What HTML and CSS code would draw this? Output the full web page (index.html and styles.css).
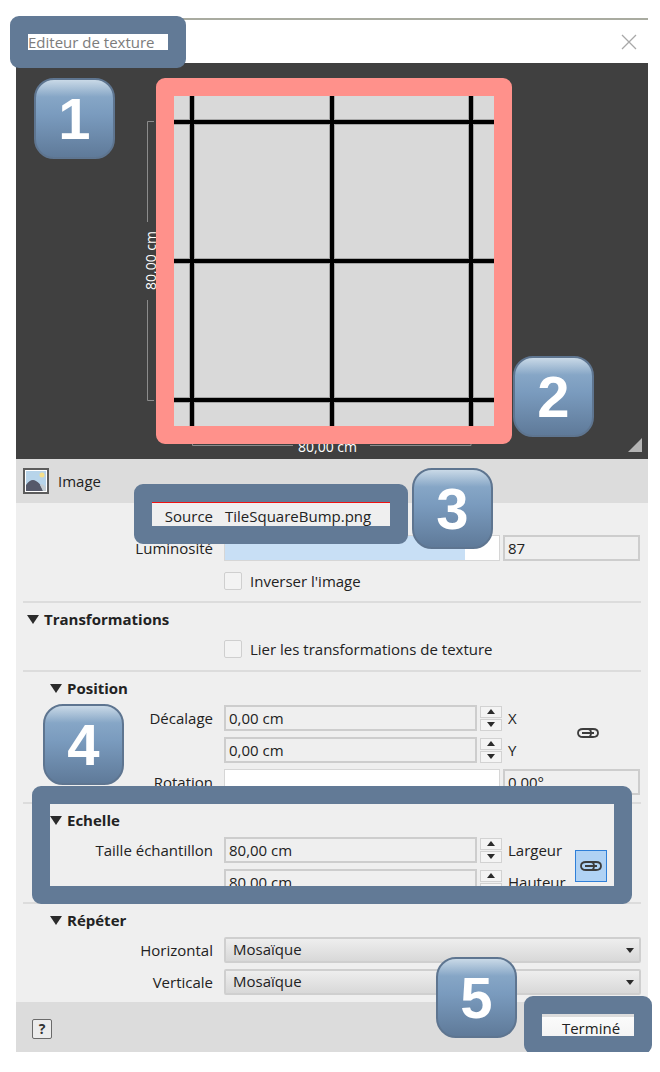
FILE: index.html
```html
<!DOCTYPE html>
<html>
<head>
    <title>Editeur de texture</title>
    <link rel="stylesheet" href="styles.css">
</head>
<body>
    <div class="window">
        <div class="titlebar">
            <span class="title">Editeur de texture</span>
            <svg class="close" width="16" height="16" viewBox="0 0 16 16"><path d="M1 1L15 15M15 1L1 15" stroke="#a8a8a8" stroke-width="1.3" fill="none"/></svg>
        </div>

        <div class="preview">
            <svg class="texture" width="320" height="330" viewBox="0 0 320 330">
                <rect width="320" height="330" fill="#d9d9d9"/>
                <g stroke="#a6a6a6" stroke-width="6">
                    <path d="M18 0V330M158 0V330M297 0V330M0 26H320M0 165H320M0 304H320"/>
                </g>
                <g stroke="#000" stroke-width="4">
                    <path d="M18 0V330M158 0V330M297 0V330M0 26H320M0 165H320M0 304H320"/>
                </g>
            </svg>
            <svg class="dims" width="632" height="396" viewBox="0 0 632 396">
                <path d="M138.5 159V58.5H131.5V337.5H138.5M131.5 159V58.5M131.5 237V337.5" fill="none" stroke="none"/>
                <path d="M138 58.500H131.500V159M131.500 237V337.500H138" fill="none" stroke="#8c8c8c"/>
                <path d="M176.500 376V382.500H277M354 382.500H455V376" fill="none" stroke="#8c8c8c"/>
                <path d="M626 375V389H612Z" fill="#b4b4b4"/>
            </svg>
            <span class="dim-label dim-left">80,00 cm</span>
            <span class="dim-label dim-bottom">80,00 cm</span>
        </div>

        <div class="panel-head">
            <svg class="image-icon" width="26" height="26" viewBox="0 0 26 26">
                <rect x="1" y="1" width="24" height="24" fill="#fff" stroke="#5c5c5c" stroke-width="2"/>
                <rect x="3" y="3" width="20" height="20" fill="#b7d4ea"/>
                <circle cx="19" cy="7" r="2.500" fill="#f6e08a"/>
                <path d="M3 23V17Q8 10 13 13Q17 15 19 20L20 23Z" fill="#55596a"/>
                <path d="M17 17Q20 15 23 19V23H20Z" fill="#c3ccd2"/>
            </svg>
            <span>Image</span>
        </div>

        <div class="form">
            <div class="section">
                <div class="row"><label>Source</label><span class="plain">TileSquareBump.png</span></div>
                <div class="row">
                    <label>Luminosité</label>
                    <div class="slider-line">
                        <div class="slider"><div class="slider-fill"></div></div>
                        <div class="field">87</div>
                    </div>
                </div>
                <div class="check-row"><span class="checkbox"></span>Inverser l'image</div>
            </div>

            <div class="section">
                <div class="heading">Transformations</div>
                <div class="check-row check-first"><span class="checkbox"></span>Lier les transformations de texture</div>
            </div>

            <div class="section">
                <div class="heading sub">Position</div>
                <div class="rows">
                    <div class="row">
                        <label>Décalage</label>
                        <div class="spin-line">
                            <div class="field">0,00 cm</div>
                            <div class="spinner"><span class="up"></span><span class="down"></span></div>
                            <span class="axis">X</span>
                        </div>
                    </div>
                    <div class="row">
                        <label></label>
                        <div class="spin-line">
                            <div class="field">0,00 cm</div>
                            <div class="spinner"><span class="up"></span><span class="down"></span></div>
                            <span class="axis">Y</span>
                        </div>
                    </div>
                    <div class="link">
                        <svg width="24" height="12" viewBox="0 0 24 12"><path d="M7 2H12Q15 2 15 6T12 10H7Q2 10 2 6T7 2ZM12 2H17Q22 2 22 6T17 10H12M6 6H18" fill="none" stroke="#3c3c3c" stroke-width="1.800"/></svg>
                    </div>
                    <div class="row">
                        <label>Rotation</label>
                        <div class="slider-line">
                            <div class="slider"></div>
                            <div class="field">0,00°</div>
                        </div>
                    </div>
                </div>
            </div>

            <div class="section">
                <div class="heading sub">Echelle</div>
                <div class="rows">
                    <div class="row">
                        <label>Taille échantillon</label>
                        <div class="spin-line">
                            <div class="field">80,00 cm</div>
                            <div class="spinner"><span class="up"></span><span class="down"></span></div>
                            <span class="axis">Largeur</span>
                        </div>
                    </div>
                    <div class="row">
                        <label></label>
                        <div class="spin-line">
                            <div class="field">80,00 cm</div>
                            <div class="spinner"><span class="up"></span><span class="down"></span></div>
                            <span class="axis">Hauteur</span>
                        </div>
                    </div>
                    <div class="link link-on">
                        <svg width="24" height="12" viewBox="0 0 24 12"><path d="M7 2H12Q15 2 15 6T12 10H7Q2 10 2 6T7 2ZM12 2H17Q22 2 22 6T17 10H12M6 6H18" fill="none" stroke="#3c3c3c" stroke-width="1.800"/></svg>
                    </div>
                </div>
            </div>

            <div class="section last">
                <div class="heading sub">Répéter</div>
                <div class="rows">
                    <div class="row"><label>Horizontal</label><div class="select">Mosaïque</div></div>
                    <div class="row"><label>Verticale</label><div class="select">Mosaïque</div></div>
                </div>
            </div>
        </div>

        <div class="footer">
            <span class="help">?</span>
            <span class="done">Terminé</span>
        </div>

        <!-- annotations over the screenshot -->
        <div class="frame frame-texture"></div>
        <div class="frame frame-title"></div>
        <div class="frame frame-source"></div>
        <div class="frame frame-scale"></div>
        <div class="frame frame-done"></div>
        <div class="badge badge-1">1</div>
        <div class="badge badge-2">2</div>
        <div class="badge badge-3">3</div>
        <div class="badge badge-4">4</div>
        <div class="badge badge-5">5</div>
    </div>
</body>
</html>
```

FILE: styles.css
```css
body {
    margin: 0;
    background: #fff;
    font-family: "Open Sans", "Noto Sans", sans-serif;
    font-size: 15px;
    color: #222;
}
.window {
    position: relative;
    width: 632px;
    height: 1034px;
    margin: 18px 0 0 16px;
    display: flex;
    flex-direction: column;
}
.titlebar {
    height: 43px;
    flex: none;
    border-top: 2px solid #a9aba0;
    background: #fff;
    display: flex;
    align-items: center;
    justify-content: space-between;
    padding: 0 12px;
}
.title {
    color: #7c7c7c;
    font-size: 15px;
}
.close {
    margin-right: -1px;
}
.preview {
    position: relative;
    height: 396px;
    flex: none;
    background: #404040;
}
.texture {
    position: absolute;
    left: 158px;
    top: 33px;
}
.dims {
    position: absolute;
    left: 0;
    top: 0;
}
.dim-label {
    position: absolute;
    color: #fff;
    font-size: 14px;
    white-space: nowrap;
}
.dim-left {
    left: 125px;
    top: 168px;
    writing-mode: vertical-rl;
    transform: rotate(180deg);
}
.dim-bottom {
    left: 282px;
    top: 374px;
}
.panel-head {
    height: 44px;
    flex: none;
    background: #dcdcdc;
    display: flex;
    align-items: center;
    gap: 9px;
    padding-left: 7px;
    box-sizing: border-box;
}
.form {
    flex: 1;
    background: #efefef;
    padding: 0 7px;
}
.section {
    border-bottom: 2px solid #dcdcdc;
    padding: 6px 0 7px;
}
.section:first-child {
    padding: 0 0 10px;
}
.section.last {
    border-bottom: none;
}
.section:nth-child(2) {
    padding-bottom: 11px;
}
.heading {
    height: 20px;
    line-height: 20px;
    font-weight: 700;
    display: flex;
    align-items: center;
    gap: 5px;
    padding-left: 4px;
}
.heading::before {
    content: "";
    border-left: 6px solid transparent;
    border-right: 6px solid transparent;
    border-top: 9px solid #2b2b2b;
}
.heading.sub {
    padding-left: 27px;
}
.rows {
    position: relative;
    display: flex;
    flex-direction: column;
    gap: 6px;
    margin-top: 7px;
}
.section:first-child .row + .row {
    margin-top: 6px;
}
.row {
    display: grid;
    grid-template-columns: 190px 1fr;
    column-gap: 11px;
    height: 26px;
    align-items: center;
}
.row label {
    text-align: right;
}
.plain {
    padding-left: 1px;
}
.field {
    box-sizing: border-box;
    height: 26px;
    line-height: 23px;
    padding-left: 3px;
    border: 2px solid #cdcdcd;
    background: #efefef;
}
.slider-line {
    display: grid;
    grid-template-columns: 276px 137px;
    column-gap: 3px;
}
.slider {
    box-sizing: border-box;
    height: 26px;
    border: 1px solid #d6d6d6;
    background: #fff;
}
.slider-fill {
    width: 240px;
    height: 100%;
    background: #c8dff5;
}
.spin-line {
    display: flex;
    align-items: center;
}
.spin-line .field {
    width: 253px;
}
.spinner {
    width: 22px;
    margin-left: 3px;
    display: flex;
    flex-direction: column;
    gap: 1px;
}
.spinner span {
    box-sizing: border-box;
    height: 12px;
    border: 1px solid #d2d2d2;
    background: #f4f4f4;
    display: flex;
    align-items: center;
    justify-content: center;
}
.spinner span::before {
    content: "";
    border-left: 4px solid transparent;
    border-right: 4px solid transparent;
}
.spinner .up::before {
    border-bottom: 5px solid #2b2b2b;
}
.spinner .down::before {
    border-top: 5px solid #2b2b2b;
}
.axis {
    margin-left: 6px;
}
.link {
    position: absolute;
    left: 553px;
    top: 22px;
    height: 12px;
}
.link svg {
    display: block;
}
.link-on {
    box-sizing: border-box;
    left: 552px;
    top: 13px;
    width: 32px;
    height: 32px;
    border: 1px solid #2f7fd8;
    background: #b0d2f4;
    display: flex;
    align-items: center;
    justify-content: center;
}
.check-row {
    display: flex;
    align-items: center;
    gap: 8px;
    height: 20px;
    margin: 10px 0 0 201px;
}
.check-first {
    margin-top: 10px;
}
.checkbox {
    box-sizing: border-box;
    width: 18px;
    height: 18px;
    border: 1px solid #cfcfcf;
    border-radius: 2px;
    background: #f3f3f3;
}
.select {
    box-sizing: border-box;
    height: 26px;
    line-height: 21px;
    padding-left: 7px;
    border: 2px solid #cfcfcf;
    border-radius: 2px;
    background: linear-gradient(#eeeeee, #d8d8d8);
    position: relative;
}
.select::after {
    content: "";
    position: absolute;
    right: 5px;
    top: 9px;
    border-left: 4px solid transparent;
    border-right: 4px solid transparent;
    border-top: 5px solid #2b2b2b;
}
.footer {
    height: 53px;
    flex: none;
    background: #dcdcdc;
    display: flex;
    align-items: center;
    justify-content: space-between;
    padding: 0 8px 0 16px;
    box-sizing: border-box;
}
.help {
    box-sizing: border-box;
    width: 20px;
    height: 20px;
    border: 1px solid #6a6a6a;
    border-radius: 2px;
    background: #ececec;
    font-weight: 700;
    font-size: 14px;
    line-height: 18px;
    text-align: center;
    color: #333;
}
.done {
    width: 100px;
    height: 24px;
    line-height: 23px;
    text-align: center;
    padding-left: 2px;
    box-sizing: border-box;
    background: linear-gradient(#fbfbfb, #f2f2f2);
}
.frame {
    position: absolute;
    box-sizing: border-box;
    border: 18px solid #627a96;
    border-radius: 9px;
}
.frame-title {
    left: -6px;
    top: -2px;
    width: 176px;
    height: 52px;
    background: none;
}
.frame-source {
    left: 118px;
    top: 466px;
    width: 274px;
    height: 60px;
}
.frame-source::before {
    content: "";
    position: absolute;
    left: 0;
    right: 0;
    top: 0;
    height: 1px;
    background: #f01010;
}
.frame-scale {
    left: 16px;
    top: 768px;
    width: 600px;
    height: 118px;
}
.frame-done {
    left: 508px;
    top: 978px;
    width: 128px;
    height: 58px;
}
.frame-texture {
    left: 140px;
    top: 60px;
    width: 356px;
    height: 366px;
    border-color: #ff918b;
}
.badge {
    position: absolute;
    box-sizing: border-box;
    width: 81px;
    height: 81px;
    border: 2px solid #5e7590;
    border-radius: 20px;
    background: linear-gradient(#c9d9e7 0%, #86a6c6 22%, #7a9bbe 45%, #5f7a99 100%);
    color: #fff;
    font-family: "Liberation Sans", Arial, sans-serif;
    font-weight: 700;
    font-size: 58px;
    line-height: 77px;
    text-align: center;
}
.badge-1 {
    left: 18px;
    top: 60px;
}
.badge-2 {
    left: 497px;
    top: 338px;
}
.badge-3 {
    left: 396px;
    top: 450px;
}
.badge-4 {
    left: 27px;
    top: 686px;
}
.badge-5 {
    left: 420px;
    top: 939px;
}
```
